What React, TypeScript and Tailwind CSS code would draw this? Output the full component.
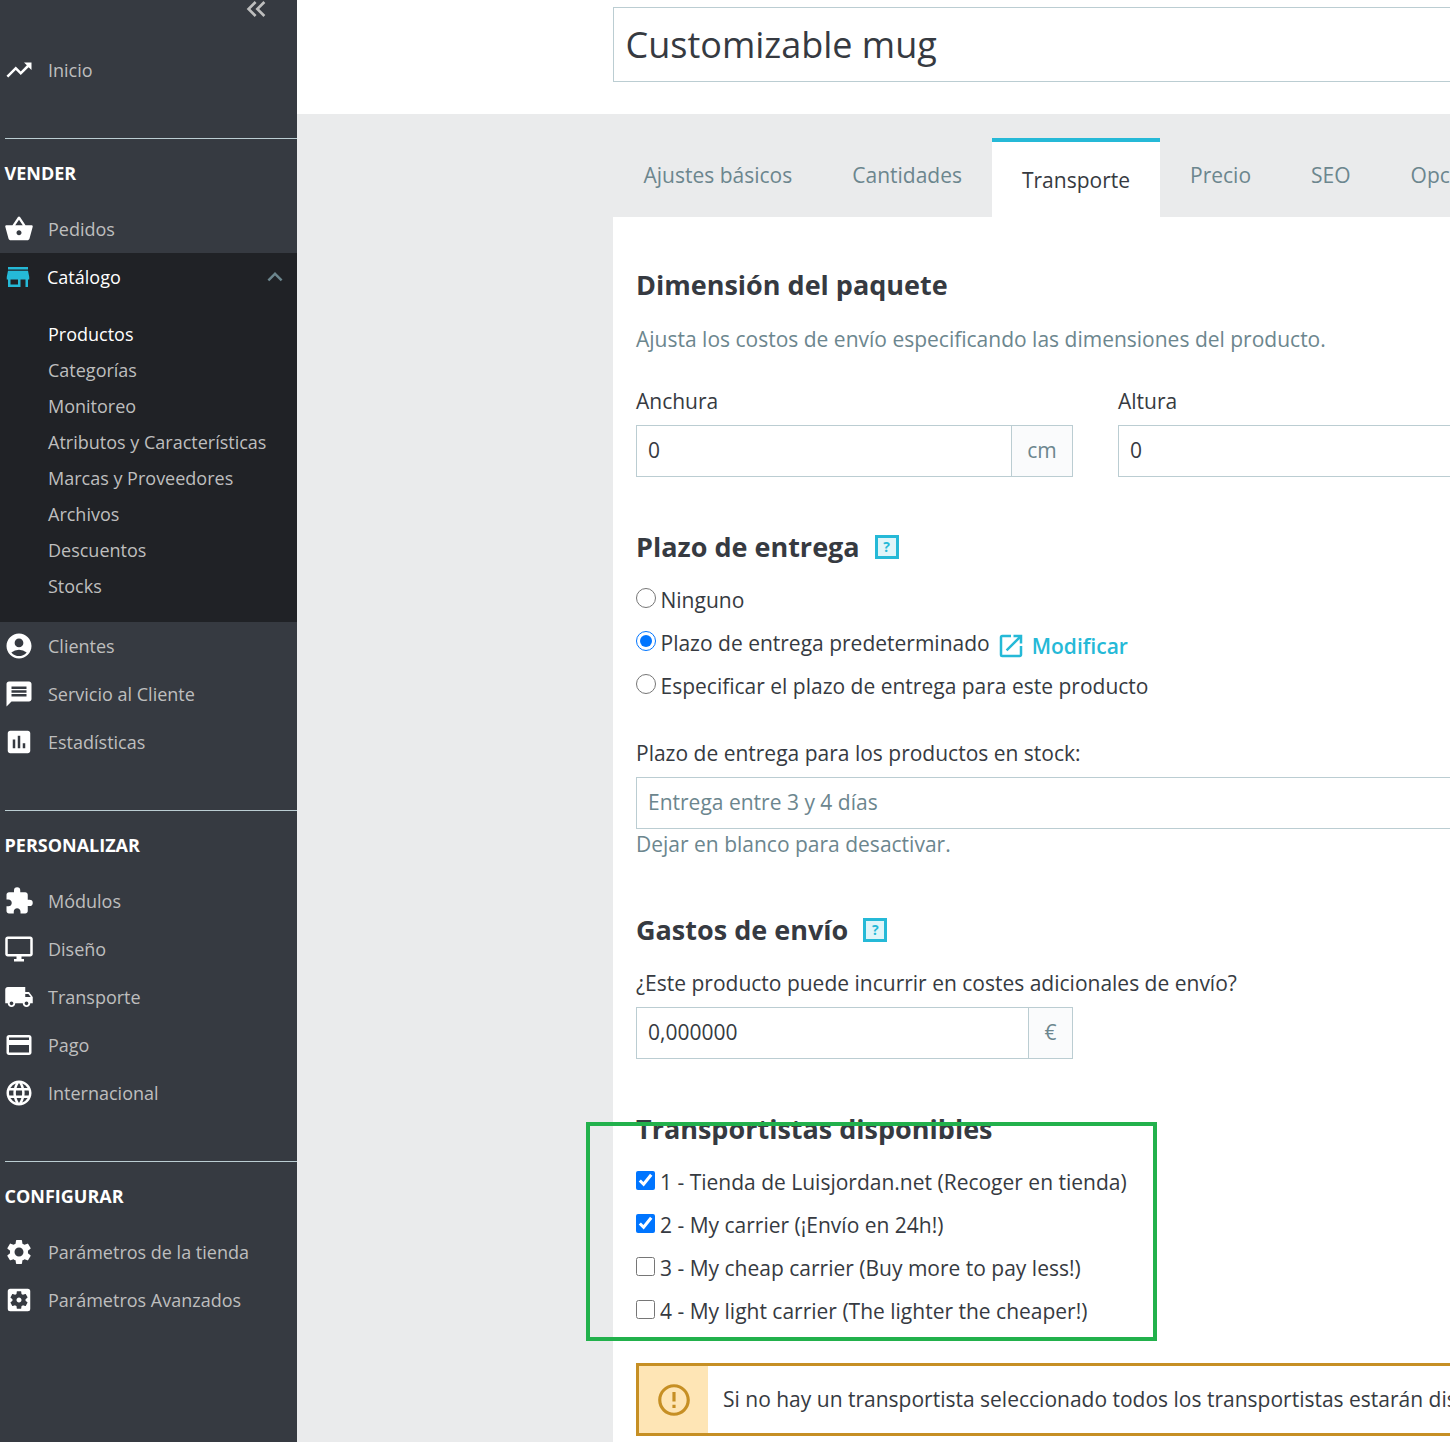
import React from "react";
import {
  MdTrendingUp, MdShoppingBasket, MdStore, MdAccountCircle, MdMessage, MdAssessment, MdExtension,
  MdOutlineDesktopWindows, MdLocalShipping, MdCreditCard, MdLanguage, MdSettings, MdSettingsApplications,
  MdKeyboardDoubleArrowLeft, MdExpandLess, MdOpenInNew, MdErrorOutline,
} from "react-icons/md";

type IconT = React.ComponentType<{ className?: string }>;

function NavRow({ icon: Icon, label }: { icon: IconT; label: string }) {
  return (
    <div className="flex h-12 items-center">
      <div className="flex w-[48px] pl-[4px]">
        <Icon className="h-[30px] w-[30px] text-white" />
      </div>
      <span className="text-[18px] leading-6 text-[#bebebe]">{label}</span>
    </div>
  );
}

function Divider() {
  return <div className="ml-[5px] mt-[44px] h-px bg-[#bbcdd2]" />;
}

function SectionHead({ label }: { label: string }) {
  return <div className="h-[66px] pl-[4.5px] pt-[22px] text-[18px] font-bold leading-6 text-white">{label}</div>;
}

function Help() {
  return (
    <span className="ml-[15px] inline-flex h-[24px] w-[24px] items-center justify-center border-[3px] border-[#25b9d7] bg-[#e0f5f9] text-[14px] font-bold leading-none text-[#25b9d7]">
      ?
    </span>
  );
}

function Heading({ children, className }: { children: React.ReactNode; className: string }) {
  return <h2 className={`flex items-center text-[27px] font-bold leading-9 text-[#363a41] ${className}`}>{children}</h2>;
}

function Radio({ checked, label }: { checked?: boolean; label: string }) {
  return (
    <label className="flex h-7 items-center text-[21px] leading-7 text-[#363a41]">
      <input type="radio" name="lead" defaultChecked={checked} className="m-0 mb-[4px] mr-[4.5px] h-[20px] w-[20px]" />
      {label}
    </label>
  );
}

function Carrier({ checked, label }: { checked?: boolean; label: string }) {
  return (
    <label className="flex h-[43px] items-center text-[21px] leading-7 text-[#363a41]">
      <input type="checkbox" defaultChecked={checked} className="m-0 mb-[2px] mr-[5px] h-[19px] w-[19px]" />
      {label}
    </label>
  );
}

function Field({ value, suffix, inputW, suffixW }: { value: string; suffix: string; inputW: string; suffixW: string }) {
  return (
    <div className="flex h-[52px] w-[437px] border border-[#bbcdd2] text-[21px] text-[#363a41]">
      <div className={`flex items-center pl-[11px] ${inputW}`}>{value}</div>
      <div className={`flex items-center justify-center border-l border-[#bbcdd2] bg-[#fafbfc] text-[#6c868e] ${suffixW}`}>{suffix}</div>
    </div>
  );
}

export default function App() {
  const tabs = ["Ajustes básicos", "Cantidades", "Transporte", "Precio", "SEO", "Opciones"];
  return (
    <div className="relative flex h-[1442px] w-[1450px] overflow-hidden bg-white font-['Open_Sans',sans-serif]">
      <aside className="h-full w-[297px] shrink-0 bg-[#363a41]">
        <div className="flex h-[46px] justify-end pr-[25px]">
          <MdKeyboardDoubleArrowLeft className="-mt-[7px] h-[32px] w-[32px] text-[#bebebe]" />
        </div>
        <NavRow icon={MdTrendingUp} label="Inicio" />
        <Divider />
        <SectionHead label="VENDER" />
        <NavRow icon={MdShoppingBasket} label="Pedidos" />
        <div className="h-[369px] bg-[#202226]">
          <div className="flex h-12 items-center justify-between pr-[7px]">
            <div className="flex items-center">
              <div className="flex w-[47px] pl-[3px]">
                <MdStore className="h-[30px] w-[30px] text-[#25b9d7]" />
              </div>
              <span className="text-[18px] leading-6 text-white">Catálogo</span>
            </div>
            <MdExpandLess className="h-[30px] w-[30px] text-[#6c868e]" />
          </div>
          <div className="pl-[48px] pt-[15px] text-[18px] text-[#bebebe]">
            <div className="flex h-9 items-center text-white">Productos</div>
            {["Categorías", "Monitoreo", "Atributos y Características", "Marcas y Proveedores", "Archivos", "Descuentos", "Stocks"].map((s) => (
              <div key={s} className="flex h-9 items-center">{s}</div>
            ))}
          </div>
        </div>
        <NavRow icon={MdAccountCircle} label="Clientes" />
        <NavRow icon={MdMessage} label="Servicio al Cliente" />
        <NavRow icon={MdAssessment} label="Estadísticas" />
        <Divider />
        <SectionHead label="PERSONALIZAR" />
        <NavRow icon={MdExtension} label="Módulos" />
        <NavRow icon={MdOutlineDesktopWindows} label="Diseño" />
        <NavRow icon={MdLocalShipping} label="Transporte" />
        <NavRow icon={MdCreditCard} label="Pago" />
        <NavRow icon={MdLanguage} label="Internacional" />
        <Divider />
        <SectionHead label="CONFIGURAR" />
        <NavRow icon={MdSettings} label="Parámetros de la tienda" />
        <NavRow icon={MdSettingsApplications} label="Parámetros Avanzados" />
      </aside>

      <main className="flex h-full min-w-0 flex-1 flex-col">
        <header className="h-[114px] shrink-0 pl-[316px] pt-[7px]">
          <div className="flex h-[75px] w-[1000px] items-center border border-[#bbcdd2] pl-[11.5px] text-[36px] text-[#363a41]">
            Customizable mug
          </div>
        </header>
        <div className="flex-1 bg-[#eaebec] pl-[316px] pt-[24px]">
          <div className="ml-[0.5px] flex h-[79px] w-[1000px]">
            {tabs.map((t) =>
              t === "Transporte" ? (
                <div key={t} className="border-t-[4px] border-[#25b9d7] bg-white px-[30px] pt-[24px] text-[21px] leading-7 text-[#363a41]">{t}</div>
              ) : (
                <div key={t} className="px-[30px] pt-[23px] text-[21px] leading-7 text-[#6c868e]">{t}</div>
              ),
            )}
          </div>
          <section className="h-[1300px] w-[1000px] bg-white pl-[23px]">
            <Heading className="pt-[50px]">Dimensión del paquete</Heading>
            <p className="mt-[22px] text-[21px] leading-7 text-[#6c868e]">Ajusta los costos de envío especificando las dimensiones del producto.</p>
            <div className="mt-[34px] flex gap-[45px]">
              <div>
                <div className="text-[21px] leading-7 text-[#363a41]">Anchura</div>
                <div className="mt-[10px]">
                  <Field value="0" suffix="cm" inputW="w-[374px]" suffixW="w-[61px]" />
                </div>
              </div>
              <div>
                <div className="text-[21px] leading-7 text-[#363a41]">Altura</div>
                <div className="mt-[10px]">
                  <Field value="0" suffix="cm" inputW="w-[374px]" suffixW="w-[61px]" />
                </div>
              </div>
            </div>

            <Heading className="mt-[52px]">Plazo de entrega<Help /></Heading>
            <div className="mt-[21px] flex flex-col gap-[15px]">
              <Radio label="Ninguno" />
              <div className="flex h-7 items-center">
                <Radio checked label="Plazo de entrega predeterminado" />
                <a className="ml-[6px] flex translate-y-[3px] items-center font-semibold leading-7 text-[#25b9d7]">
                  <MdOpenInNew className="mr-[6px] h-[30px] w-[30px]" />
                  <span className="text-[21px]">Modificar</span>
                </a>
              </div>
              <Radio label="Especificar el plazo de entrega para este producto" />
            </div>
            <div className="mt-[39px] text-[21px] leading-7 text-[#363a41]">Plazo de entrega para los productos en stock:</div>
            <div className="mt-[10px] flex h-[52px] w-full items-center border border-[#bbcdd2] pl-[11px] text-[21px] text-[#6c868e]">Entrega entre 3 y 4 días</div>
            <div className="mt-[1px] text-[21px] leading-7 text-[#6c868e]">Dejar en blanco para desactivar.</div>

            <Heading className="mt-[54px]">Gastos de envío<Help /></Heading>
            <div className="mt-[21px] text-[21px] leading-7 text-[#363a41]">¿Este producto puede incurrir en costes adicionales de envío?</div>
            <div className="mt-[10px]">
              <Field value="0,000000" suffix="€" inputW="w-[391px]" suffixW="w-[44px]" />
            </div>

            <Heading className="mt-[52px]">Transportistas disponibles</Heading>
            <div className="mt-[13px] flex flex-col">
              <Carrier checked label="1 - Tienda de Luisjordan.net (Recoger en tienda)" />
              <Carrier checked label="2 - My carrier (¡Envío en 24h!)" />
              <Carrier label="3 - My cheap carrier (Buy more to pay less!)" />
              <Carrier label="4 - My light carrier (The lighter the cheaper!)" />
            </div>
            <div className="mt-[31px] flex h-[73px] w-[900px] border-[3px] border-[#c68f24]">
              <div className="flex w-[69px] shrink-0 items-center justify-center bg-[#fee5b5]">
                <MdErrorOutline className="h-[38px] w-[38px] text-[#c68f24]" />
              </div>
              <div className="flex items-center whitespace-nowrap pl-[15px] text-[21px] text-[#363a41]">
                Si no hay un transportista seleccionado todos los transportistas estarán disponibles.
              </div>
            </div>
          </section>
        </div>
      </main>

      <div className="pointer-events-none absolute left-[586px] top-[1122px] h-[219px] w-[571px] border-[4px] border-[#22b14c]" />
    </div>
  );
}
